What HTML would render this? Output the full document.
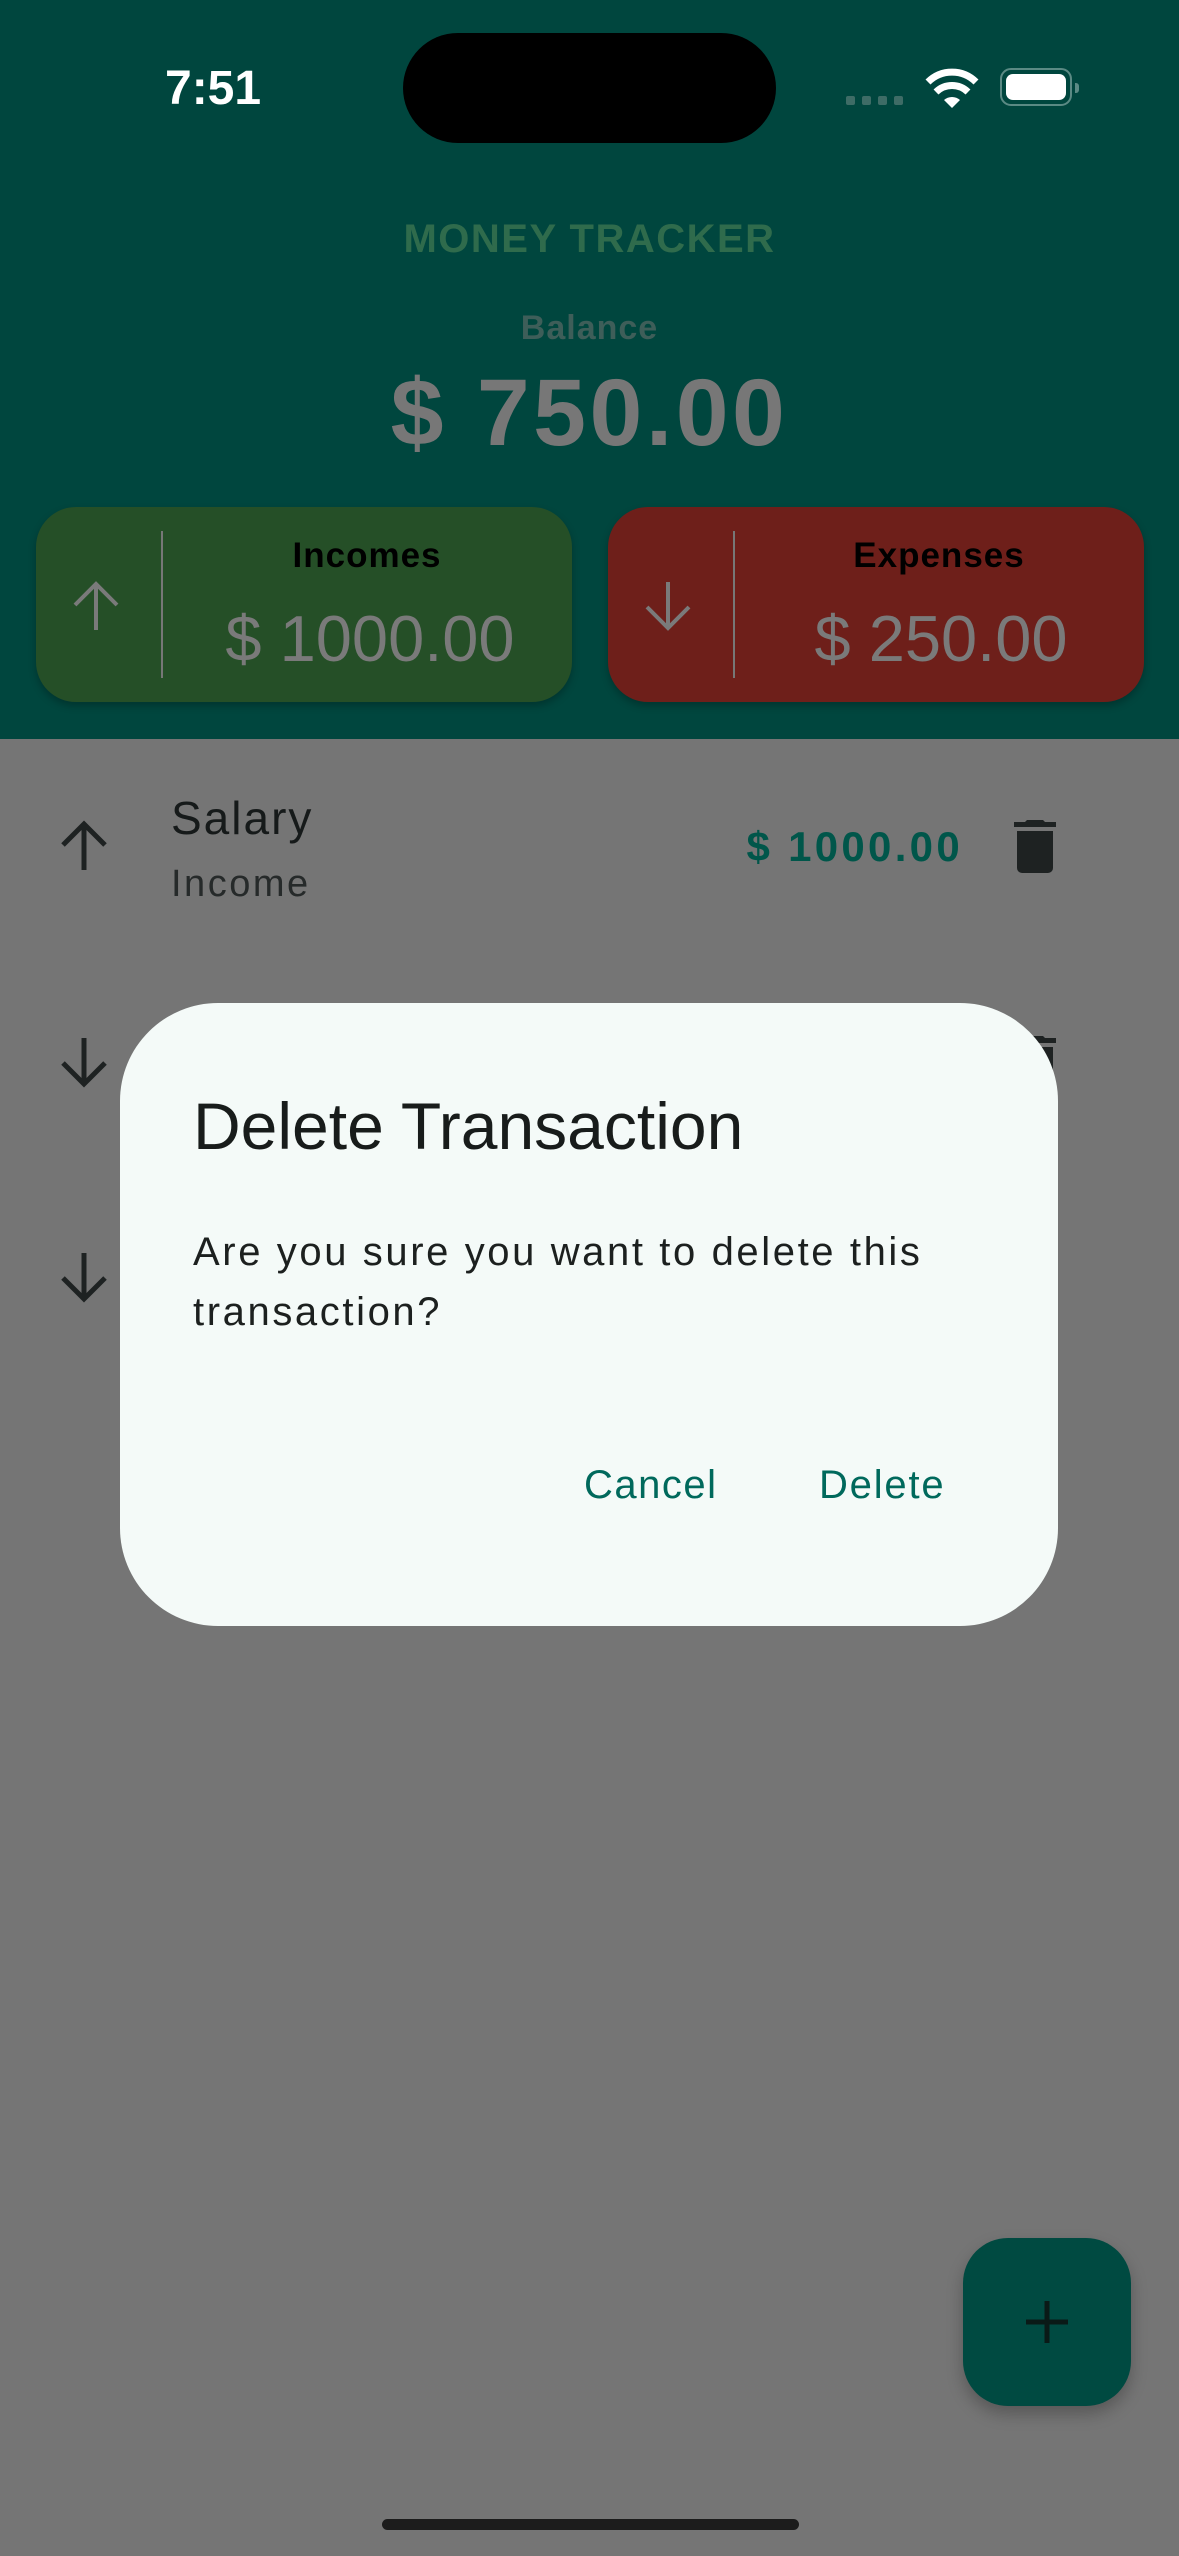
<!DOCTYPE html>
<html><head><meta charset="utf-8"><style>
*{margin:0;padding:0;box-sizing:border-box}
body{width:1179px;height:2556px;background:#757575;position:relative;overflow:hidden;font-family:"Liberation Sans",sans-serif}
.a{position:absolute;white-space:nowrap}
</style></head><body>
<div class="a" style="left:0;top:0;width:1179px;height:739px;background:#00463e"></div>
<div class="a" style="left:165px;top:65px;font-size:48px;line-height:48px;font-weight:bold;color:#fff;">7:51</div>
<div class="a" style="left:403px;top:33px;width:373px;height:110px;border-radius:55px;background:#000"></div>
<div class="a" style="left:846px;top:96px;width:9px;height:9px;border-radius:2px;background:#3e6c66;box-shadow:16px 0 #3e6c66,32px 0 #3e6c66,48px 0 #3e6c66"></div>
<svg class="a" style="left:925px;top:68px" width="54" height="40" viewBox="0 0 54 40"><path d="M27 40 L19 32 A12 12 0 0 1 35 32 Z" fill="#fff"/><path d="M11 24 A23 23 0 0 1 43 24" stroke="#fff" stroke-width="7" fill="none"/><path d="M3 14 A34 34 0 0 1 51 14" stroke="#fff" stroke-width="7" fill="none"/></svg>
<div class="a" style="left:1000px;top:68px;width:72px;height:38px;border:2px solid #5b8a84;border-radius:11px"></div>
<div class="a" style="left:1006px;top:74px;width:60px;height:26px;border-radius:7px;background:#fff"></div>
<div class="a" style="left:1075px;top:83px;width:4px;height:10px;border-radius:0 3px 3px 0;background:#5b8a84"></div>

<div class="a" style="left:0;width:1179px;text-align:center;top:219px;font-size:40px;line-height:40px;font-weight:bold;color:#2f6b4c;letter-spacing:1.5px">MONEY TRACKER</div>
<div class="a" style="left:0;width:1179px;text-align:center;top:311px;font-size:34px;line-height:34px;font-weight:bold;color:#3e5e59;letter-spacing:1px">Balance</div>
<div class="a" style="left:0;width:1179px;text-align:center;top:366px;font-size:95px;line-height:95px;font-weight:bold;color:#777;letter-spacing:3.5px">$ 750.00</div>

<div class="a" style="left:36px;top:507px;width:536px;height:195px;border-radius:40px;background:#254f27;box-shadow:0 4px 8px rgba(0,0,0,.25)"></div>
<svg class="a" style="left:70px;top:580px" width="52" height="52" viewBox="0 0 52 52"><path d="M26 50 V4 M5 25 L26 4 L47 25" stroke="#7a7a7a" stroke-width="4" fill="none"/></svg>
<div class="a" style="left:161px;top:531px;width:2px;height:147px;background:#777"></div>
<div class="a" style="left:162px;width:410px;text-align:center;top:538px;font-size:35px;line-height:35px;font-weight:bold;color:#000;letter-spacing:1px">Incomes</div>
<div class="a" style="left:165px;width:410px;text-align:center;top:606px;font-size:65px;line-height:65px;color:#7a7a7a">$ 1000.00</div>

<div class="a" style="left:608px;top:507px;width:536px;height:195px;border-radius:40px;background:#6e1f1a;box-shadow:0 4px 8px rgba(0,0,0,.25)"></div>
<svg class="a" style="left:642px;top:580px" width="52" height="52" viewBox="0 0 52 52"><path d="M26 2 V48 M5 27 L26 48 L47 27" stroke="#7a7a7a" stroke-width="4" fill="none"/></svg>
<div class="a" style="left:733px;top:531px;width:2px;height:147px;background:#777"></div>
<div class="a" style="left:734px;width:410px;text-align:center;top:538px;font-size:35px;line-height:35px;font-weight:bold;color:#000;letter-spacing:1px">Expenses</div>
<div class="a" style="left:736px;width:410px;text-align:center;top:606px;font-size:65px;line-height:65px;color:#7a7a7a">$ 250.00</div>

<svg class="a" style="left:58px;top:820px" width="52" height="52" viewBox="0 0 52 52"><path d="M26 50 V4 M5 25 L26 4 L47 25" stroke="#1e2222" stroke-width="5" fill="none"/></svg>
<div class="a" style="left:171px;top:795px;font-size:46px;line-height:46px;color:#161a1a;letter-spacing:2px">Salary</div>
<div class="a" style="left:171px;top:865px;font-size:38px;line-height:38px;color:#262a2a;letter-spacing:2.5px">Income</div>
<div class="a" style="right:216px;top:826px;font-size:42px;line-height:42px;font-weight:bold;color:#00564a;letter-spacing:3.3px">$ 1000.00</div>
<svg class="a" style="left:1013px;top:818px" width="44" height="56" viewBox="0 0 44 56"><path d="M14 2 H30 L32 4 H43 V9 H1 V4 H12 Z" fill="#1e2222"/><path d="M4 13 H40 V50 A5 5 0 0 1 35 55 H9 A5 5 0 0 1 4 50 Z" fill="#1e2222"/></svg>

<svg class="a" style="left:58px;top:1036px" width="52" height="52" viewBox="0 0 52 52"><path d="M26 2 V48 M5 27 L26 48 L47 27" stroke="#1e2222" stroke-width="5" fill="none"/></svg>
<svg class="a" style="left:1013px;top:1034px" width="44" height="56" viewBox="0 0 44 56"><path d="M14 2 H30 L32 4 H43 V9 H1 V4 H12 Z" fill="#1e2222"/><path d="M4 13 H40 V50 A5 5 0 0 1 35 55 H9 A5 5 0 0 1 4 50 Z" fill="#1e2222"/></svg>
<svg class="a" style="left:58px;top:1251px" width="52" height="52" viewBox="0 0 52 52"><path d="M26 2 V48 M5 27 L26 48 L47 27" stroke="#1e2222" stroke-width="5" fill="none"/></svg>

<div class="a" style="left:120px;top:1003px;width:938px;height:623px;border-radius:98px;background:#f4faf8"></div>
<div class="a" style="left:193px;top:1093px;font-size:66px;line-height:66px;color:#181c1b;letter-spacing:0px">Delete Transaction</div>
<div class="a" style="left:193px;top:1222px;font-size:40px;line-height:60px;color:#1c201f;letter-spacing:2.6px">Are you sure you want to delete this<br>transaction?</div>
<div class="a" style="left:584px;top:1465px;font-size:40px;line-height:40px;color:#00695c;letter-spacing:1.5px">Cancel</div>
<div class="a" style="left:819px;top:1465px;font-size:40px;line-height:40px;color:#00695c;letter-spacing:1.8px">Delete</div>

<div class="a" style="left:963px;top:2238px;width:168px;height:168px;border-radius:45px;background:#004a41;box-shadow:0 8px 16px rgba(0,0,0,.25)"></div>
<svg class="a" style="left:1026px;top:2301px" width="42" height="42" viewBox="0 0 42 42"><path d="M21 0 V42 M0 21 H42" stroke="#0a1a17" stroke-width="5"/></svg>
<div class="a" style="left:382px;top:2519px;width:417px;height:11px;border-radius:6px;background:#1c1c1c"></div>
</body></html>
